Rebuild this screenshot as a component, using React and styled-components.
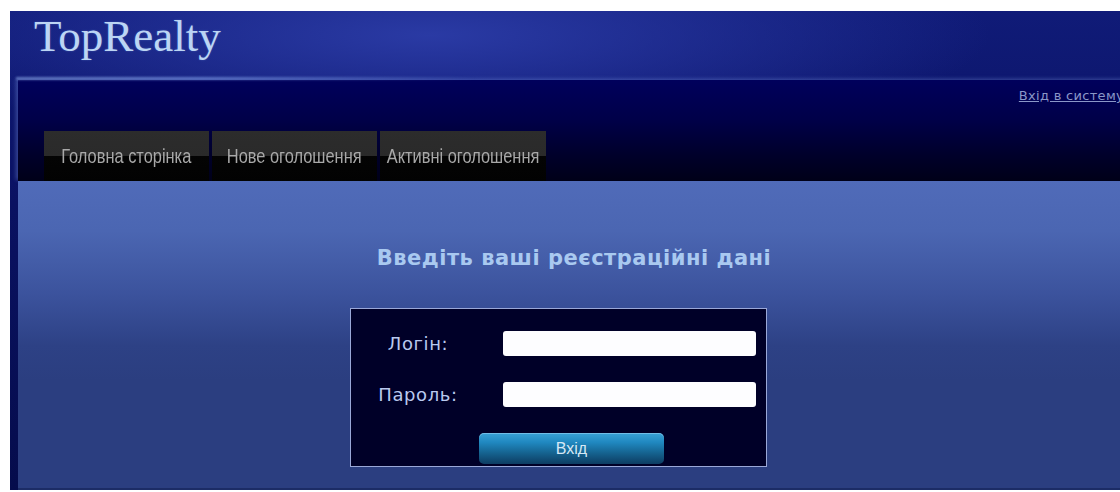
import React from "react";
import styled, { createGlobalStyle } from "styled-components";

const GlobalStyle = createGlobalStyle`
    html, body {
        margin: 0;
        padding: 0;
        background: #fff;
        overflow: hidden;
    }
    #root {
        width: 1130px;
    }
`;

const Page = styled.div`
    padding: 11px 0 0 10px;
    background: #fff;
`;

const Frame = styled.div`
    background:
        radial-gradient(ellipse 560px 110px at 420px 24px, #2a3aa4 0%, rgba(42, 58, 164, 0) 100%),
        linear-gradient(180deg, #101b78 0%, #0a1262 40%, #050c4c 100%);
`;

const LogoBand = styled.div`
    height: 69px;
    padding-left: 24px;
`;

const Logo = styled.h1`
    margin: 0;
    font-family: "Liberation Serif", "DejaVu Serif", serif;
    font-weight: normal;
    font-size: 45px;
    line-height: 50px;
    color: #bcd5f4;
    text-shadow: 0 0 2px rgba(120, 160, 230, 0.4);
`;

const Panel = styled.div`
    position: relative;
    margin-left: 8px;

    /* soft highlight along the top edge, fading out to the right */
    &::before {
        content: "";
        position: absolute;
        left: -2px;
        top: -3px;
        width: 460px;
        height: 3px;
        background: linear-gradient(90deg, rgba(150, 180, 240, 0.5), rgba(130, 160, 235, 0.55) 40%, rgba(100, 130, 220, 0));
        filter: blur(1px);
    }
`;

const Nav = styled.div`
    height: 101px;
    display: flex;
    flex-direction: column;
    background: linear-gradient(180deg, #00005c 0%, #000048 40%, #00002a 75%, #000018 100%);
    box-shadow: -2px -1px 4px rgba(140, 170, 240, 0.35);
`;

const TopLinks = styled.div`
    display: flex;
    justify-content: flex-end;
    padding: 8px 6px 0 0;
`;

const LoginLink = styled.a`
    font-family: "DejaVu Sans", Verdana, sans-serif;
    font-size: 13px;
    line-height: 16px;
    letter-spacing: 0.3px;
    color: #8a97c8;
    text-decoration: underline;
    cursor: pointer;
`;

const Tabs = styled.div`
    margin-top: auto;
    display: flex;
    gap: 3px;
    padding-left: 26px;
`;

const Tab = styled.div`
    width: ${(props) => props.width}px;
    height: 50px;
    display: flex;
    align-items: center;
    justify-content: center;
    background: linear-gradient(180deg, #2c2c2c 0%, #2a2a2a 50%, #040404 50%, #020202 100%);
    cursor: pointer;
`;

const TabText = styled.span`
    display: inline-block;
    font-family: "Liberation Sans", Arial, sans-serif;
    font-size: 20px;
    line-height: 22px;
    color: #a8a8a8;
    white-space: nowrap;
    transform: scaleX(0.82);
`;

const Content = styled.div`
    height: 309px;
    padding-top: 66px;
    box-sizing: border-box;
    background: linear-gradient(180deg, #506bb9 0px, #4b66b2 50px, #3b529c 115px, #2d4185 165px, #2b3e80 200px, #2b3e80 100%);
    border-bottom: 2px solid #1c2c66;
`;

const Heading = styled.h2`
    margin: 0;
    text-align: center;
    font-family: "DejaVu Sans", Verdana, sans-serif;
    font-weight: bold;
    font-size: 21px;
    line-height: 22px;
    letter-spacing: 0.5px;
    color: #a9c9f0;
`;

const LoginBox = styled.form`
    margin: 39px 0 0 332px;
    padding: 22px 0 2px;
    box-sizing: border-box;
    width: 417px;
    height: 159px;
    border: 1px solid #9aa8d8;
    background: #000028;
    display: grid;
    grid-template-columns: 134px 253px;
    column-gap: 18px;
    row-gap: 26px;
    align-items: center;
`;

const Label = styled.label`
    text-align: center;
    font-family: "DejaVu Sans", Verdana, sans-serif;
    font-size: 18px;
    letter-spacing: 0.6px;
    color: #b9c9ef;
`;

const Field = styled.input`
    width: 253px;
    height: 25px;
    box-sizing: border-box;
    border: none;
    border-radius: 3px;
    background: #fdfdff;
    outline: none;
`;

const SubmitButton = styled.button`
    grid-column: 1 / -1;
    justify-self: start;
    margin-left: 128px;
    width: 185px;
    height: 31px;
    border: none;
    border-radius: 5px;
    background: linear-gradient(180deg, #3aa2d6 0%, #2088c0 30%, #15628f 65%, #0d3c62 100%);
    box-shadow: inset 0 1px 0 rgba(170, 220, 250, 0.5);
    font-family: "Liberation Sans", Arial, sans-serif;
    font-size: 16px;
    color: #d6e8f6;
    cursor: pointer;
`;

const tabs = [
    { title: "Головна сторінка", width: 165 },
    { title: "Нове оголошення", width: 165 },
    { title: "Активні оголошення", width: 166 },
];

const App = () => {
    return (
        <Page>
            <GlobalStyle />
            <Frame>
                <LogoBand>
                    <Logo>TopRealty</Logo>
                </LogoBand>
                <Panel>
                    <Nav>
                        <TopLinks>
                            <LoginLink>Вхід в систему</LoginLink>
                        </TopLinks>
                        <Tabs>
                            {tabs.map((tab) => (
                                <Tab key={tab.title} width={tab.width}>
                                    <TabText>{tab.title}</TabText>
                                </Tab>
                            ))}
                        </Tabs>
                    </Nav>
                    <Content>
                        <Heading>Введіть ваші реєстраційні дані</Heading>
                        <LoginBox onSubmit={(e) => e.preventDefault()}>
                            <Label htmlFor="login">Логін:</Label>
                            <Field id="login" type="text" />
                            <Label htmlFor="password">Пароль:</Label>
                            <Field id="password" type="password" />
                            <SubmitButton type="submit">Вхід</SubmitButton>
                        </LoginBox>
                    </Content>
                </Panel>
            </Frame>
        </Page>
    );
};

export default App;
